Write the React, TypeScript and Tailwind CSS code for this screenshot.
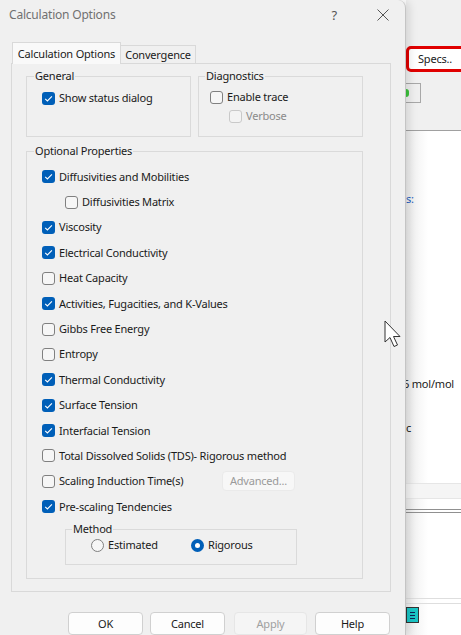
import React from 'react';

const font = { fontFamily: '"Segoe UI", "Noto Sans", "Liberation Sans", sans-serif' };

const Check: React.FC<{ checked?: boolean; disabled?: boolean }> = ({ checked, disabled }) =>
  checked ? (
    <span className="w-[13px] h-[13px] rounded-[3px] bg-[#005fb8] flex items-center justify-center shrink-0">
      <svg width="13" height="13" viewBox="0 0 13 13">
        <path d="M3.2 6.8 L5.4 9 L9.9 4.3" fill="none" stroke="#fff" strokeWidth="1.1" />
      </svg>
    </span>
  ) : (
    <span
      className={`w-[13px] h-[13px] rounded-[3px] border shrink-0 ${
        disabled ? 'border-[#c9c9c9] bg-[#f3f3f3]' : 'border-[#808080] bg-[#f6f6f6]'
      }`}
    />
  );

const Radio: React.FC<{ checked?: boolean }> = ({ checked }) =>
  checked ? (
    <span className="w-[13px] h-[13px] rounded-full bg-[#005fb8] flex items-center justify-center shrink-0">
      <span className="w-[5px] h-[5px] rounded-full bg-white" />
    </span>
  ) : (
    <span className="w-[13px] h-[13px] rounded-full border border-[#808080] bg-[#f6f6f6] shrink-0" />
  );

// group box: label sits in the top border line
const Group: React.FC<{ title: string; inset?: string; className?: string; bodyClass?: string; children: React.ReactNode }> = ({
  title,
  inset = 'w-[8px]',
  className = '',
  bodyClass = '',
  children,
}) => (
  <div className={`flex flex-col ${className}`}>
    <div className="flex h-[16px]">
      <span className={`${inset} h-[8px] self-end border-l border-t border-[#dadada]`} />
      <span className="px-[1px]">{title}</span>
      <span className="flex-1 h-[8px] self-end border-r border-t border-[#dadada]" />
    </div>
    <div className={`flex-1 border border-t-0 border-[#dadada] ${bodyClass}`}>{children}</div>
  </div>
);

const props: { label: string; checked: boolean; sub?: boolean }[] = [
  { label: 'Diffusivities and Mobilities', checked: true },
  { label: 'Diffusivities Matrix', checked: false, sub: true },
  { label: 'Viscosity', checked: true },
  { label: 'Electrical Conductivity', checked: true },
  { label: 'Heat Capacity', checked: false },
  { label: 'Activities, Fugacities, and K-Values', checked: true },
  { label: 'Gibbs Free Energy', checked: false },
  { label: 'Entropy', checked: false },
  { label: 'Thermal Conductivity', checked: true },
  { label: 'Surface Tension', checked: true },
  { label: 'Interfacial Tension', checked: true },
  { label: 'Total Dissolved Solids (TDS)- Rigorous method', checked: false },
];

const App: React.FC = () => {
  return (
    <div
      className="w-[461px] h-[635px] overflow-hidden relative flex bg-white text-[11px] tracking-[-0.2px] leading-[16px] text-[#1a1a1a]"
      style={font}
    >
      {/* dialog */}
      <div className="w-[406px] h-full shrink-0 bg-[#f0f0f0] border-r border-[#c4c4c4] rounded-tr-[8px] relative z-10 shadow-[3px_0_10px_rgba(0,0,0,0.13)] flex flex-col">
        <div className="h-[31px] flex items-center pl-[9px] pr-[16px] text-[12px] text-[#707070]">
          <span>Calculation Options</span>
          <span className="ml-auto mr-[40px] text-[13px] text-[#555]">?</span>
          <svg width="12" height="12" viewBox="0 0 12 12">
            <path d="M0.5 0.5 L11.5 11.5 M11.5 0.5 L0.5 11.5" stroke="#555" strokeWidth="1" />
          </svg>
        </div>

        <div className="pl-[11px] pt-[12px]">
          <div className="flex items-end h-[21px] pl-[1px]">
            <div className="h-[22px] w-[109px] border border-b-0 border-[#d9d9d9] bg-[#f9f9f9] relative z-10 -mb-px flex items-center justify-center">
              Calculation Options
            </div>
            <div className="h-[18px] w-[75px] border border-l-0 border-b-0 border-[#d9d9d9] bg-[#f0f0f0] flex items-center justify-center">
              Convergence
            </div>
          </div>

          <div className="w-[380px] h-[529px] border border-[#d9d9d9] bg-[#f0f0f0] pt-[4px] px-[14px]">
            <div className="flex gap-[7px] items-stretch">
              <Group title="General" className="w-[165px]" bodyClass="pl-[15px] pt-[6px]">
                <div className="flex items-center gap-[4px] h-[16px]">
                  <Check checked />
                  <span>Show status dialog</span>
                </div>
              </Group>
              <Group title="Diagnostics" inset="w-[7px]" className="w-[165px]" bodyClass="pl-[11px] pt-[5px] pb-[12px]">
                <div className="flex items-center gap-[4px] h-[16px]">
                  <Check />
                  <span>Enable trace</span>
                </div>
                <div className="flex items-center gap-[4px] h-[16px] mt-[3px] pl-[19px] text-[#8a8a8a]">
                  <Check disabled />
                  <span>Verbose</span>
                </div>
              </Group>
            </div>

            <Group title="Optional Properties" className="mt-[6px] w-[337px]" bodyClass="pl-[15px] pt-[5px] pb-[13px]">
              {props.map(p => (
                <div key={p.label} className={`flex items-center gap-[4px] h-[25.4px] ${p.sub ? 'pl-[23px]' : ''}`}>
                  <Check checked={p.checked} />
                  <span>{p.label}</span>
                </div>
              ))}
              <div className="flex items-center h-[25.4px]">
                <Check />
                <span className="ml-[4px] w-[163px]">Scaling Induction Time(s)</span>
                <span className="w-[73px] h-[20px] rounded-[4px] bg-[#f7f7f7] border border-[#eaeaea] text-[#9a9a9a] flex items-center justify-center">
                  Advanced...
                </span>
              </div>
              <div className="flex items-center gap-[4px] h-[25.4px]">
                <Check checked />
                <span>Pre-scaling Tendencies</span>
              </div>
              <Group title="Method" inset="w-[7px]" className="mt-[2px] ml-[23px] w-[232px]" bodyClass="pl-[25px] pb-[11px]">
                <div className="flex items-center h-[16px]">
                  <div className="w-[100px] flex items-center gap-[4px]">
                    <Radio />
                    <span>Estimated</span>
                  </div>
                  <div className="flex items-center gap-[4px]">
                    <Radio checked />
                    <span>Rigorous</span>
                  </div>
                </div>
              </Group>
            </Group>
          </div>

          <div className="flex mt-[20px] pl-[57px]">
            <span className="w-[75px] h-[23px] rounded-[4px] bg-[#fdfdfd] border border-[#d0d0d0] flex items-center justify-center">OK</span>
            <span className="ml-[7px] w-[75px] h-[23px] rounded-[4px] bg-[#fdfdfd] border border-[#d0d0d0] flex items-center justify-center">Cancel</span>
            <span className="ml-[9px] w-[73px] h-[23px] rounded-[4px] bg-[#f5f5f5] border border-[#e6e6e6] text-[#a0a0a0] flex items-center justify-center">Apply</span>
            <span className="ml-[8px] w-[75px] h-[23px] rounded-[4px] bg-[#fdfdfd] border border-[#d0d0d0] flex items-center justify-center">Help</span>
          </div>
        </div>
      </div>

      {/* background application */}
      <div className="flex-1 flex flex-col">
        <div className="h-[131px] bg-[#f0f0f0] border-b border-[#a0a0a0] flex flex-col">
          <div className="mt-[46px] h-[26px] border-[3px] border-[#e00000] rounded-[5px] -mr-[6px] bg-white flex items-center pl-[9px]">
            Specs..
          </div>
          <div className="mt-[11px] h-[20px] w-[15px] border border-[#a8a8a8] border-l-0 bg-[#efefef] flex items-center">
            <span className="w-[3px] h-[8px] rounded-r-full bg-[#3cc43c]" />
          </div>
        </div>
        <div className="flex-1 bg-gradient-to-r from-[#ececec] to-white to-[40%] flex flex-col">
          <span className="mt-[60px] text-[#1f5fbf]">s:</span>
          <span className="mt-[169px] -ml-[3px]">6 mol/mol</span>
          <span className="mt-[28px]">c</span>
          <div className="mt-[47px] h-[16px] border-y border-[#e6e6e6] bg-[#f5f5f5]" />
          <div className="mt-[10px] h-[4px] border-y border-[#909090]" />
          <div className="mt-[85px] h-[6px] border-y border-[#dedede]" />
          <div className="flex items-start mt-[3px]">
            <span className="w-[13px] h-[16px] bg-[#1ac6c6] border border-[#333] flex flex-col justify-center gap-[2px] px-[3px]">
              <span className="h-px bg-[#125]" />
              <span className="h-px bg-[#125]" />
              <span className="h-px bg-[#125]" />
            </span>
          </div>
        </div>
      </div>

      {/* mouse cursor */}
      <svg className="absolute left-[384px] top-[320px] z-20" width="22" height="30" viewBox="0 0 22 30">
        <path d="M1 1 L1 22 L6 17.5 L10 26.5 L13.5 25 L9.5 16.5 L16 16.5 Z" fill="#fff" stroke="#333" strokeWidth="1" strokeLinejoin="round" />
      </svg>
    </div>
  );
};

export default App;
